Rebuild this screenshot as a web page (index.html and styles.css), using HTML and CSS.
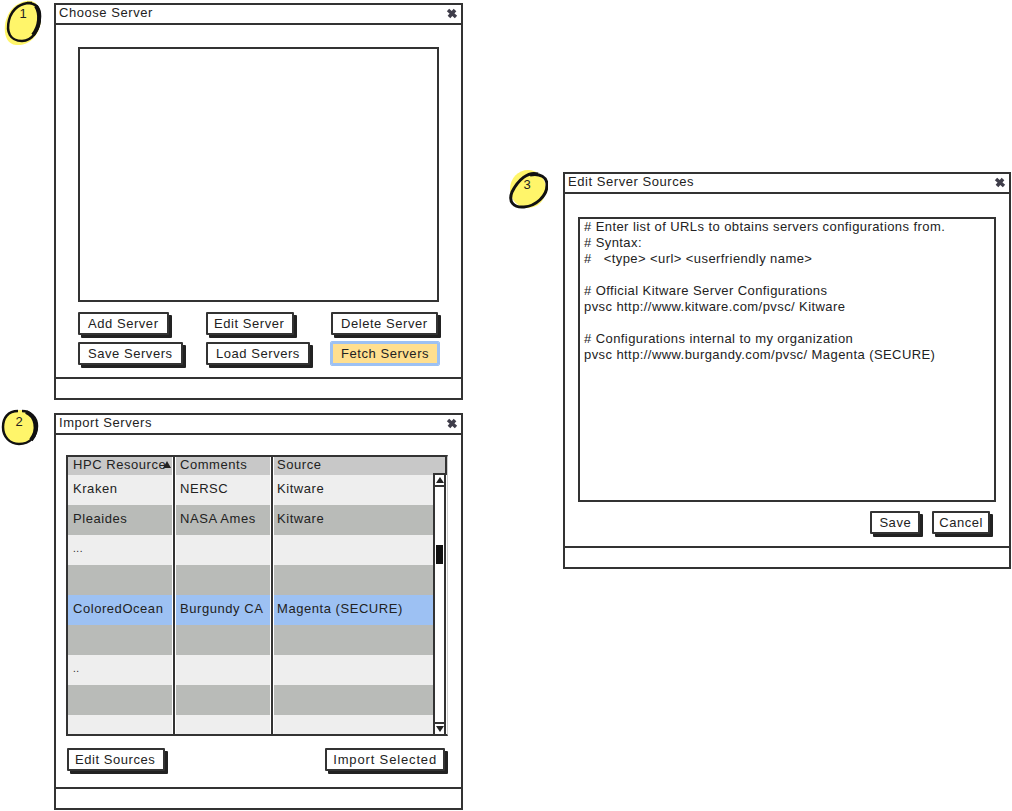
FILE: index.html
```html
<!DOCTYPE html>
<html>
<head>
  <title>Server dialogs mockup</title>
  <meta charset="utf-8">
  <link rel="stylesheet" href="styles.css">
</head>
<body>
  <div class="badge badge-1">
    <svg width="40" height="48" viewBox="0 0 40 48">
      <path d="M24 1 C34 -1 39 8 39 18 C39 32 30 46 14 45 C3 44 1 30 4 20 C7 10 14 3 24 1 Z" fill="#fff56a"/>
      <path d="M30 3 C20 2 10 8 7 20 C4 32 8 41 20 41 C30 41 38 30 38 16 C38 8 34 3 25 3" fill="none" stroke="#111" stroke-width="2.5"/>
      <path d="M34 6 C39 14 38 26 31 35" fill="none" stroke="#111" stroke-width="4"/>
    </svg>
    <span class="badge-num">1</span>
  </div>
  <div class="badge badge-2">
    <svg width="40" height="40" viewBox="0 0 40 40">
      <circle cx="20" cy="19" r="17" fill="#fff56a"/>
      <path d="M18 3 C8 3 3 10 3 19 C3 29 10 36 19 36 C30 36 37 28 37 18 C37 9 30 3 22 3" fill="none" stroke="#111" stroke-width="2.5"/>
      <path d="M26 4 C36 8 39 22 31 32" fill="none" stroke="#111" stroke-width="4"/>
    </svg>
    <span class="badge-num">2</span>
  </div>
  <div class="badge badge-3">
    <svg width="40" height="42" viewBox="0 0 40 42">
      <ellipse cx="20" cy="19" rx="18" ry="19" fill="#fff56a"/>
      <path d="M30 4 C20 1 10 10 4 22 C0 32 6 38 16 37 C28 36 39 26 39 15 C39 7 32 3 22 5" fill="none" stroke="#111" stroke-width="3"/>
    </svg>
    <span class="badge-num">3</span>
  </div>

  <!-- Choose Server -->
  <div class="window win-choose">
    <div class="titlebar">
      <span>Choose Server</span>
      <svg class="close" width="12" height="11" viewBox="0 0 12 11"><path d="M2 2 L10 9 M9 2 L3 9" stroke="#3f3d4a" stroke-width="3.5"/></svg>
    </div>
    <div class="win-body choose-body">
      <div class="listbox"></div>
      <div class="button-grid">
        <button class="btn">Add Server</button>
        <button class="btn btn-tight">Edit Server</button>
        <button class="btn">Delete Server</button>
        <button class="btn">Save Servers</button>
        <button class="btn">Load Servers</button>
        <button class="btn btn-focus">Fetch Servers</button>
      </div>
    </div>
    <div class="statusbar"></div>
  </div>

  <!-- Import Servers -->
  <div class="window win-import">
    <div class="titlebar">
      <span>Import Servers</span>
      <svg class="close" width="12" height="11" viewBox="0 0 12 11"><path d="M2 2 L10 9 M9 2 L3 9" stroke="#3f3d4a" stroke-width="3.5"/></svg>
    </div>
    <div class="win-body import-body">
      <div class="datagrid">
        <div class="row row-head">
          <div class="cell">HPC Resource<span class="sort"></span></div>
          <div class="cell">Comments</div>
          <div class="cell">Source</div>
        </div>
        <div class="grid-main">
          <div class="rows">
            <div class="row row-light"><div class="cell">Kraken</div><div class="cell">NERSC</div><div class="cell">Kitware</div></div>
            <div class="row row-dark"><div class="cell">Pleaides</div><div class="cell">NASA Ames</div><div class="cell">Kitware</div></div>
            <div class="row row-light"><div class="cell small">...</div><div class="cell"></div><div class="cell"></div></div>
            <div class="row row-dark"><div class="cell"></div><div class="cell"></div><div class="cell"></div></div>
            <div class="row row-selected"><div class="cell">ColoredOcean</div><div class="cell">Burgundy CA</div><div class="cell">Magenta (SECURE)</div></div>
            <div class="row row-dark"><div class="cell"></div><div class="cell"></div><div class="cell"></div></div>
            <div class="row row-light"><div class="cell small">..</div><div class="cell"></div><div class="cell"></div></div>
            <div class="row row-dark"><div class="cell"></div><div class="cell"></div><div class="cell"></div></div>
            <div class="row row-light"><div class="cell"></div><div class="cell"></div><div class="cell"></div></div>
          </div>
          <div class="scrollbar">
            <div class="arrow"><span class="tri-up"></span></div>
            <div class="track"><div class="thumb"></div></div>
            <div class="arrow arrow-down"><span class="tri-down"></span></div>
          </div>
        </div>
      </div>
      <div class="import-actions">
        <button class="btn btn-tight">Edit Sources</button>
        <button class="btn btn-wide">Import Selected</button>
      </div>
    </div>
    <div class="statusbar"></div>
  </div>

  <!-- Edit Server Sources -->
  <div class="window win-edit">
    <div class="titlebar">
      <span>Edit Server Sources</span>
      <svg class="close" width="12" height="11" viewBox="0 0 12 11"><path d="M2 2 L10 9 M9 2 L3 9" stroke="#3f3d4a" stroke-width="3.5"/></svg>
    </div>
    <div class="win-body edit-body">
      <div class="sources"># Enter list of URLs to obtains servers configurations from.
# Syntax:
#   &lt;type&gt; &lt;url&gt; &lt;userfriendly name&gt;

# Official Kitware Server Configurations
pvsc http://www.kitware.com/pvsc/ Kitware

# Configurations internal to my organization
pvsc http://www.burgandy.com/pvsc/ Magenta (SECURE)</div>
      <div class="edit-actions">
        <button class="btn btn-save">Save</button>
        <button class="btn btn-cancel">Cancel</button>
      </div>
    </div>
    <div class="statusbar"></div>
  </div>
</body>
</html>
```

FILE: styles.css
```css
body {
  margin: 0;
  background-color: #fff;
  color: #222;
  font-family: "Liberation Sans", Arial, sans-serif;
  font-size: 13px;
  letter-spacing: 0.55px;
}

/* the three dialogs sit on a free canvas */
.window {
  position: absolute;
  box-sizing: border-box;
  height: 397px;
  display: flex;
  flex-direction: column;
  border: 2px solid #333;
  background-color: #fff;
}
.win-choose { left: 54px; top: 3px; width: 409px; }
.win-import { left: 54px; top: 413px; width: 409px; }
.win-edit { left: 563px; top: 172px; width: 448px; }

.titlebar {
  box-sizing: border-box;
  height: 20px;
  flex: none;
  display: flex;
  justify-content: space-between;
  align-items: center;
  padding: 0 3px 3px 3px;
  border-bottom: 2px solid #333;
}
.close { margin-top: 1px; }

.win-body {
  flex: 1;
  box-sizing: border-box;
}
.statusbar {
  height: 19px;
  flex: none;
  border-top: 2px solid #333;
}

.btn {
  box-sizing: border-box;
  height: 23px;
  padding: 0 8px;
  border: 2px solid #333;
  border-radius: 1px;
  background-color: #fff;
  box-shadow: 3px 3px 0 #222;
  color: #222;
  font-family: inherit;
  font-size: 13px;
  letter-spacing: 0.55px;
  white-space: nowrap;
}
.btn-tight { padding: 0 8px 0 6px; }
.btn-wide {
  padding: 0 6px;
  letter-spacing: 0.85px;
}
.btn-save { padding: 0 7px; }
.btn-cancel { padding: 0 5px; }
.btn-focus {
  background-color: #ffdf8f;
  border: 2px solid #9dc1f3;
  box-shadow: none;
  outline: 1px solid #9dc1f3;
}

/* Choose Server */
.choose-body { padding: 22px 0 0 22px; }
.listbox {
  box-sizing: border-box;
  width: 361px;
  height: 255px;
  border: 2px solid #333;
}
.button-grid {
  display: grid;
  grid-template-columns: 128px 125px auto;
  grid-template-rows: 23px 23px;
  row-gap: 7px;
  justify-items: start;
  margin-top: 10px;
}

/* Import Servers */
.import-body { padding: 20px 14px 0 10px; }
.datagrid {
  box-sizing: border-box;
  width: 382px;
  height: 281px;
  border: 2px solid #333;
  border-right: 1px solid #ccc;
  overflow: hidden;
}
.row {
  display: grid;
  grid-template-columns: 105px 98px 1fr;
  height: 30px;
}
.row-head {
  box-sizing: border-box;
  height: 18px;
  background-color: #c8c8c8;
  border-right: 2px solid #333;
}
.row-light { background-color: #eeeeee; }
.row-dark { background-color: #b9bbb8; }
.row-selected { background-color: #9dc1f3; }
.cell {
  position: relative;
  box-sizing: border-box;
  padding-left: 4px;
  line-height: 28px;
  border-left: 2px solid #333;
  border-right: 1px solid #fff;
  box-shadow: inset 1px 0 0 #fff;
  white-space: nowrap;
}
.row-head .cell { line-height: 16px; }
.cell:first-child {
  border-left: none;
  box-shadow: none;
  padding-left: 5px;
}
.cell:nth-child(2) { padding-left: 5px; }
.cell:last-child { border-right: none; }
.cell.small { font-size: 10px; }
.sort {
  position: absolute;
  right: 1px;
  top: 4px;
  border-left: 4px solid transparent;
  border-right: 4px solid transparent;
  border-bottom: 7px solid #222;
}
.grid-main { display: flex; }
.rows {
  width: 365px;
  height: 259px;
  overflow: hidden;
}
.scrollbar {
  box-sizing: border-box;
  width: 13px;
  height: 261px;
  margin-top: -2px;
  display: flex;
  flex-direction: column;
  border: 2px solid #333;
  border-bottom: none;
  background-color: #fff;
}
.arrow {
  height: 10px;
  flex: none;
  display: flex;
  justify-content: center;
  align-items: center;
  border-bottom: 2px solid #333;
}
.arrow-down {
  border-bottom: none;
  border-top: 2px solid #333;
}
.tri-up {
  border-left: 4px solid transparent;
  border-right: 4px solid transparent;
  border-bottom: 6px solid #222;
}
.tri-down {
  border-left: 4px solid transparent;
  border-right: 4px solid transparent;
  border-top: 6px solid #222;
}
.track { flex: 1; }
.thumb {
  width: 7px;
  height: 19px;
  margin: 58px 0 0 1px;
  background-color: #111;
}
.import-actions {
  display: flex;
  justify-content: space-between;
  width: 378px;
  margin: 12px 0 0 1px;
}

/* Edit Server Sources */
.edit-body { padding: 23px 0 0 13px; }
.sources {
  box-sizing: border-box;
  width: 418px;
  height: 285px;
  padding: 0 4px;
  border: 2px solid #333;
  line-height: 16px;
  letter-spacing: 0.42px;
  white-space: pre;
}
.edit-actions {
  display: flex;
  justify-content: flex-end;
  gap: 12px;
  width: 412px;
  margin-top: 9px;
}

/* numbered markers */
.badge {
  position: absolute;
  width: 40px;
}
.badge svg { display: block; }
.badge-1 { left: 2px; top: 0; }
.badge-2 { left: 0; top: 408px; }
.badge-3 { left: 508px; top: 170px; }
.badge-num {
  position: absolute;
  left: 0;
  width: 100%;
  top: 6px;
  text-align: center;
  font-size: 13px;
  letter-spacing: 0;
}
.badge-1 .badge-num { left: 1px; }
.badge-2 .badge-num { left: -1px; }
.badge-3 .badge-num { left: -1px; top: 7px; }
```
